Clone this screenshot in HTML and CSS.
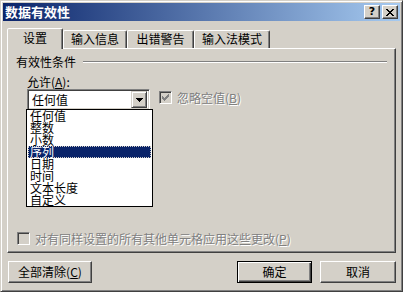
FILE: index.html
```html
<!DOCTYPE html>
<html lang="zh-CN">
<head>
    <meta charset="UTF-8">
    <title>数据有效性</title>
    <link rel="stylesheet" href="styles.css">
</head>
<body>
    <div class="window">
        <div class="titlebar">
            <span class="title">数据有效性</span>
            <div class="caption-btns">
                <button class="cap">?</button>
                <button class="cap">
                    <svg width="8" height="7" viewBox="0 0 8 7" shape-rendering="crispEdges">
                        <path d="M0 0h2v1h-2zM6 0h2v1h-2zM1 1h2v1h-2zM5 1h2v1h-2zM2 2h4v1h-4zM3 3h2v1h-2zM2 4h4v1h-4zM1 5h2v1h-2zM5 5h2v1h-2zM0 6h2v1h-2zM6 6h2v1h-2z" fill="#000"/>
                    </svg>
                </button>
            </div>
        </div>

        <div class="content">
            <!-- Pestañas -->
            <div class="tabs">
                <div class="tab active t1">设置</div>
                <div class="tab t2">输入信息</div>
                <div class="tab t3">出错警告</div>
                <div class="tab t4">输入法模式</div>
            </div>

            <div class="panel">
                <div class="group-head">
                    <span>有效性条件</span>
                    <span class="etch"></span>
                </div>

                <div class="allow-label">允许(<u>A</u>):</div>

                <div class="allow-row">
                    <div class="combo">
                        <span class="combo-text">任何值</span>
                        <span class="drop-btn">
                            <svg width="7" height="4" viewBox="0 0 7 4" shape-rendering="crispEdges">
                                <path d="M0 0h7v1h-7zM1 1h5v1h-5zM2 2h3v1h-3zM3 3h1v1h-1z" fill="#000"/>
                            </svg>
                        </span>
                    </div>
                    <div class="check disabled ignore">
                        <span class="box">
                            <svg width="7" height="7" viewBox="0 0 7 7" shape-rendering="crispEdges">
                                <path d="M6 0h1v3h-1zM5 1h1v3h-1zM4 2h1v3h-1zM3 3h1v3h-1zM2 4h1v3h-1zM1 3h1v3h-1zM0 2h1v3h-1z" fill="#808080"/>
                            </svg>
                        </span>
                        <span class="label">忽略空值(<u>B</u>)</span>
                    </div>
                </div>

                <!-- Lista desplegable abierta -->
                <ul class="listbox">
                    <li>任何值</li>
                    <li>整数</li>
                    <li>小数</li>
                    <li class="selected">序列</li>
                    <li>日期</li>
                    <li>时间</li>
                    <li>文本长度</li>
                    <li>自定义</li>
                </ul>

                <div class="spacer"></div>

                <div class="check disabled apply">
                    <span class="box"></span>
                    <span class="label">对有同样设置的所有其他单元格应用这些更改(<u>P</u>)</span>
                </div>
            </div>

            <div class="buttons">
                <button class="btn clear">全部清除(<u>C</u>)</button>
                <div class="right-btns">
                    <button class="btn default">确定</button>
                    <button class="btn cancel">取消</button>
                </div>
            </div>
        </div>
    </div>
</body>
</html>
```

FILE: styles.css
```css
body {
    margin: 0;
    background-color: #d4d0c8;
    font-family: "Noto Sans CJK SC", "DejaVu Sans", sans-serif;
    font-size: 12px;
    color: #000;
}

/* Ventana */
.window {
    width: 403px;
    height: 292px;
    box-sizing: border-box;
    background-color: #d4d0c8;
    border: 1px solid;
    border-color: #d4d0c8 #404040 #404040 #d4d0c8;
    box-shadow: inset 1px 1px #fff, inset -1px -1px #808080;
    padding: 2px;
    display: flex;
    flex-direction: column;
}

.titlebar {
    height: 18px;
    background: linear-gradient(to right, #0a246a, #a6caf0);
    display: flex;
    align-items: center;
    justify-content: space-between;
    padding-left: 2px;
}

.title {
    color: #fff;
    font-weight: bold;
    font-size: 13px;
    line-height: 18px;
}

.caption-btns {
    display: flex;
    gap: 2px;
    margin-right: 2px;
}

.cap {
    width: 16px;
    height: 14px;
    padding: 0;
    box-sizing: border-box;
    background-color: #d4d0c8;
    border: 1px solid;
    border-color: #fff #404040 #404040 #fff;
    box-shadow: inset -1px -1px #808080;
    display: flex;
    align-items: center;
    justify-content: center;
    font-family: "DejaVu Sans", sans-serif;
    font-weight: bold;
    font-size: 11px;
    line-height: 12px;
}

.content {
    flex: 1;
    padding: 7px 4px 0 4px;
    display: flex;
    flex-direction: column;
}

/* Pestañas */
.tabs {
    display: flex;
    align-items: flex-end;
    height: 20px;
    position: relative;
    z-index: 1;
}

.tab {
    height: 18px;
    box-sizing: border-box;
    border: 1px solid;
    border-bottom: none;
    border-color: #fff #404040 transparent #fff;
    box-shadow: inset -1px 0 #808080;
    border-radius: 2px 2px 0 0;
    text-align: center;
    line-height: 16px;
}

.tab.active {
    height: 21px;
    margin-bottom: -1px;
    background-color: #d4d0c8;
    line-height: 18px;
}

.t1 { width: 56px; }
.t2 { width: 64px; }
.t3 { width: 67px; }
.t4 { width: 76px; }

.panel {
    height: 205px;
    box-sizing: border-box;
    border: 1px solid;
    border-color: #fff #404040 #404040 #fff;
    box-shadow: inset -1px -1px #808080;
    position: relative;
    display: flex;
    flex-direction: column;
    padding: 7px 8px 7px 8px;
}

.group-head {
    display: flex;
    align-items: center;
    height: 12px;
    line-height: 12px;
}

.etch {
    flex: 1;
    height: 1px;
    margin-left: 7px;
    margin-right: 0;
    background-color: #808080;
    border-bottom: 1px solid #fff;
}

.allow-label {
    margin-top: 8px;
    margin-left: 11px;
    height: 12px;
    line-height: 12px;
}

.allow-row {
    display: flex;
    align-items: flex-start;
    margin-top: 1px;
    margin-left: 11px;
}

.combo {
    width: 123px;
    height: 21px;
    box-sizing: border-box;
    background-color: #fff;
    border: 1px solid;
    border-color: #808080 #fff #fff #808080;
    box-shadow: inset 1px 1px #404040, inset -1px -1px #d4d0c8;
    display: flex;
    align-items: center;
    justify-content: space-between;
    padding: 2px;
}

.combo-text {
    padding-left: 2px;
    line-height: 15px;
}

.drop-btn {
    width: 16px;
    height: 17px;
    box-sizing: border-box;
    background-color: #d4d0c8;
    border: 1px solid;
    border-color: #d4d0c8 #404040 #404040 #d4d0c8;
    box-shadow: inset 1px 1px #fff, inset -1px -1px #808080;
    display: flex;
    align-items: center;
    justify-content: center;
}

/* Casillas */
.check {
    display: flex;
    align-items: center;
}

.box {
    width: 13px;
    height: 13px;
    box-sizing: border-box;
    background-color: #d4d0c8;
    border: 1px solid;
    border-color: #808080 #fff #fff #808080;
    box-shadow: inset 1px 1px #404040, inset -1px -1px #d4d0c8;
    display: flex;
    align-items: center;
    justify-content: center;
}

.check .label {
    margin-left: 5px;
    line-height: 13px;
}

.disabled .label {
    color: #808080;
    text-shadow: 1px 1px #fff;
}

.ignore {
    margin-left: 9px;
    margin-top: 2px;
}

.spacer {
    flex: 1;
}

.apply {
    margin-left: 1px;
}

/* Lista desplegable */
.listbox {
    position: absolute;
    left: 18px;
    top: 60px;
    width: 125px;
    margin: 0;
    padding: 0;
    list-style: none;
    background-color: #fff;
    border: 1px solid #000;
}

.listbox li {
    height: 12px;
    line-height: 12px;
    padding-left: 2px;
    margin: 0 1px;
}

.listbox li.selected {
    background-color: #0a246a;
    color: #fff;
    outline: 1px dotted #d4d0c8;
    outline-offset: -1px;
}

/* Botones */
.buttons {
    display: flex;
    justify-content: space-between;
    margin-top: 8px;
    padding-left: 1px;
}

.right-btns {
    display: flex;
    gap: 8px;
}

.btn {
    height: 22px;
    box-sizing: border-box;
    padding: 0;
    background-color: #d4d0c8;
    font-family: "Noto Sans CJK SC", "DejaVu Sans", sans-serif;
    font-size: 12px;
    line-height: 16px;
    border: 1px solid;
    border-color: #fff #404040 #404040 #fff;
    box-shadow: inset -1px -1px #808080;
}

.clear { width: 84px; }
.cancel { width: 76px; }

.btn.default {
    width: 75px;
    border-color: #000;
    box-shadow: inset 1px 1px #fff, inset -1px -1px #404040, inset -2px -2px #808080;
}
```
